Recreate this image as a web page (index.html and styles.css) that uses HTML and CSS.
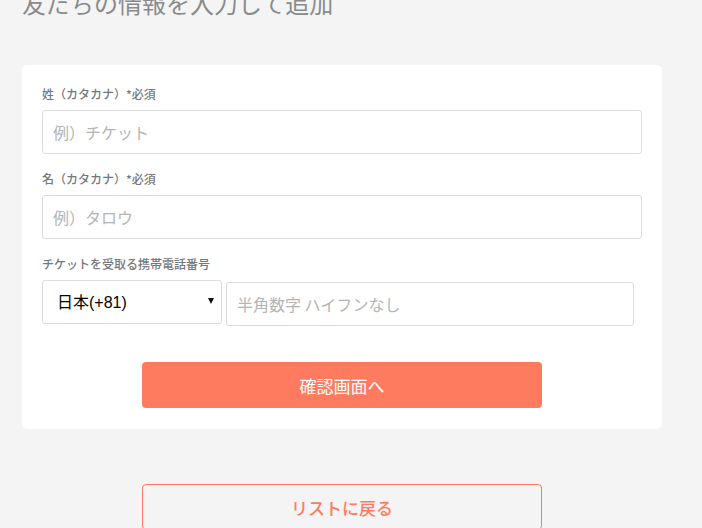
FILE: index.html
```html
<!DOCTYPE html>
<html lang="ja">
<head>
<meta charset="utf-8">
<link rel="stylesheet" href="styles.css">
</head>
<body>
<main class="page">
  <h1 class="title">友だちの情報を入力して追加</h1>
  <form class="card">
    <label class="label">姓（カタカナ）*必須</label>
    <input class="input" type="text" placeholder="例）チケット">
    <label class="label">名（カタカナ）*必須</label>
    <input class="input" type="text" placeholder="例）タロウ">
    <label class="label">チケットを受取る携帯電話番号</label>
    <div class="phone-row">
      <div class="select-wrap">
        <select class="select"><option>日本(+81)</option></select>
      </div>
      <input class="input phone" type="text" placeholder="半角数字 ハイフンなし">
    </div>
    <div class="actions">
      <button class="btn-primary" type="button">確認画面へ</button>
    </div>
  </form>
  <div class="back">
    <button class="btn-outline" type="button">リストに戻る</button>
  </div>
</main>
</body>
</html>
```
FILE: styles.css
```css
* { box-sizing: border-box; }
html, body { margin: 0; padding: 0; background: #f4f4f4; }
body {
  font-family: "Noto Sans CJK JP", "Noto Sans", sans-serif;
  overflow: hidden;
  height: 528px;
}
.page {
  width: 640px;
  margin-left: 22px;
}
.title {
  margin: -9px 0 0 0;
  font-size: 24px;
  line-height: 24px;
  font-weight: 400;
  color: #8a8a8a;
  height: 74px;
}
.card {
  background: #fff;
  border-radius: 5px;
  padding: 20px 20px 21px 20px;
  display: flex;
  flex-direction: column;
}
.label {
  font-size: 12px;
  line-height: 18px;
  font-weight: 500;
  color: #74787e;
  margin-bottom: 7px;
}
.input {
  width: 100%;
  height: 44px;
  border: 1px solid #dcdcdc;
  border-radius: 3px;
  padding: 0 10px;
  font-family: "Noto Sans CJK JP", sans-serif;
  font-size: 16px;
  color: #333;
  margin-bottom: 16px;
  outline: none;
  background: #fff;
}
.input::placeholder { color: #b4b4b4; }
.phone-row {
  display: flex;
  gap: 4px;
  align-items: flex-start;
}
.select-wrap {
  position: relative;
  width: 180px;
  flex: none;
}
.select-wrap::after {
  content: "";
  position: absolute;
  right: 8px;
  top: 18px;
  border-left: 3px solid transparent;
  border-right: 3px solid transparent;
  border-top: 6px solid #111;
}
.select {
  appearance: none;
  -webkit-appearance: none;
  width: 180px;
  height: 44px;
  border: 1px solid #dcdcdc;
  border-radius: 3px;
  background: #fff;
  padding: 0 14px;
  font-family: "Liberation Sans", "Noto Sans CJK JP", sans-serif;
  font-size: 16px;
  color: #000;
}
.phone {
  width: 408px;
  margin-top: 2px;
  margin-bottom: 0;
}
.actions {
  display: flex;
  justify-content: center;
  margin-top: 36px;
}
.btn-primary {
  width: 400px;
  height: 46px;
  border: none;
  border-radius: 4px;
  background: #ff7b5f;
  color: #fff;
  font-family: "Noto Sans CJK JP", sans-serif;
  font-size: 17px;
}
.back {
  display: flex;
  justify-content: center;
  margin-top: 55px;
}
.btn-outline {
  width: 400px;
  height: 46px;
  border: 1px solid #ff7b5f;
  border-radius: 4px;
  background: #f4f4f4;
  color: #ff7b5f;
  font-family: "Noto Sans CJK JP", sans-serif;
  font-size: 17px;
  font-weight: 500;
}
```
